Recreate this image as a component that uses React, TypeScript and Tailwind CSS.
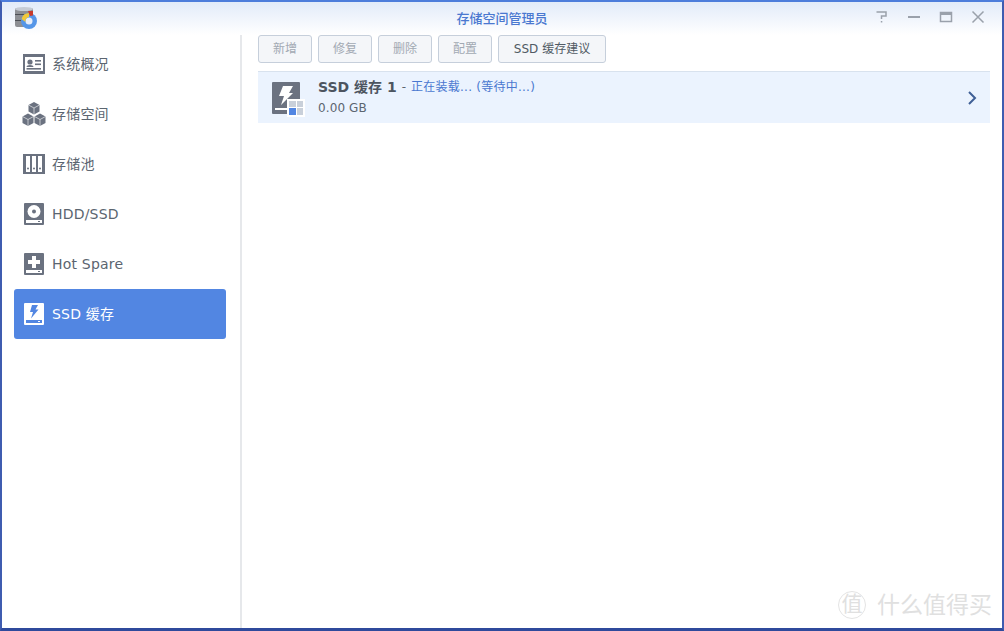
import type { ReactNode } from "react";

const FONT = "font-['DejaVu_Sans','Noto_Sans_CJK_SC',sans-serif]";

function OverviewIcon() {
  return (
    <svg width="22" height="20" viewBox="0 0 22 20">
      <rect x="0" y="0" width="22" height="20" fill="#6b7280" />
      <rect x="2" y="3" width="18" height="14" fill="#fff" />
      <circle cx="7" cy="8" r="2.600" fill="#6b7280" />
      <path d="M3.500 13c0-1.200 1.500-2 3.500-2s3.500.8 3.500 2z" fill="#6b7280" />
      <rect x="12" y="6" width="6" height="1.600" fill="#6b7280" />
      <rect x="12" y="9.500" width="6" height="1.600" fill="#6b7280" />
      <rect x="3.500" y="14" width="14.500" height="1.600" fill="#6b7280" />
    </svg>
  );
}

function CubesIcon() {
  return (
    <svg width="24" height="24" viewBox="0 0 24 24">
      <path d="M12 0l5.500 3v6.500L12 12.500l-5.500-3V3z" fill="#6b7280" />
      <path d="M6 11.500l5.500 3V21L6 24 .5 21v-6.500z" fill="#6b7280" />
      <path d="M18 11.500l5.500 3V21L18 24l-5.500-3v-6.500z" fill="#6b7280" />
      <path d="M6.500 3L12 6l5.500-3M12 6v6.500M.5 14.500l5.500 3 5.500-3M6 17.500V24M12.500 14.500l5.500 3 5.500-3M18 17.500V24" stroke="#fff" strokeWidth="0.600" fill="none" />
    </svg>
  );
}

function PoolIcon() {
  return (
    <svg width="22" height="20" viewBox="0 0 22 20">
      <rect x="0" y="0" width="22" height="20" fill="#6b7280" />
      <rect x="3" y="2" width="4" height="16" fill="#fff" />
      <rect x="9" y="2" width="4" height="16" fill="#fff" />
      <rect x="15" y="2" width="4" height="16" fill="#fff" />
      <circle cx="5" cy="14.500" r="1" fill="#6b7280" />
      <circle cx="11" cy="14.500" r="1" fill="#6b7280" />
      <circle cx="17" cy="14.500" r="1" fill="#6b7280" />
    </svg>
  );
}

function DriveFrame({ bg, fg, children }: { bg: string; fg: string; children?: ReactNode }) {
  return (
    <svg width="20" height="22" viewBox="0 0 20 22">
      <rect x="0" y="0" width="20" height="22" rx="1" fill={bg} />
      <rect x="2" y="17" width="16" height="3" fill={fg} />
      <rect x="14" y="18" width="2" height="1" fill={bg} />
      {children}
    </svg>
  );
}

function HddIcon() {
  return (
    <DriveFrame bg="#6b7280" fg="#fff">
      <circle cx="10" cy="8.500" r="6.500" fill="#fff" />
      <circle cx="10" cy="8.500" r="2" fill="#6b7280" />
    </DriveFrame>
  );
}

function SpareIcon() {
  return (
    <DriveFrame bg="#6b7280" fg="#fff">
      <path d="M8 3h4v4h4v4h-4v4H8v-4H4V7h4z" fill="#fff" />
    </DriveFrame>
  );
}

function SsdIcon() {
  return (
    <DriveFrame bg="#fff" fg="#5286e2">
      <path d="M8 2h6l-2.500 4.500h3L7 15.500 9 9H6z" fill="#5286e2" />
    </DriveFrame>
  );
}

function CacheIcon() {
  return (
    <div className="relative h-[32px] w-[28px]">
      <svg width="28" height="32" viewBox="0 0 28 32">
        <rect x="0" y="0" width="28" height="32" rx="1" fill="#6b7280" />
        <path d="M11 4h10l-4 7h4L9 23l3-9H7z" fill="#fff" />
        <rect x="3" y="26" width="13" height="2" fill="#fff" />
      </svg>
      <div className="absolute left-[15px] top-[17px] grid h-[18px] w-[18px] grid-cols-2 gap-[1px] bg-white p-[2px]">
        <div className="bg-[#c9d0da]" />
        <div className="bg-[#c9d0da]" />
        <div className="bg-[#5286e2]" />
        <div className="bg-[#c9d0da]" />
      </div>
    </div>
  );
}

function AppLogo() {
  return (
    <svg width="24" height="24" viewBox="0 0 24 24">
      <rect x="1" y="2" width="18" height="19" rx="2" fill="#8d8f94" />
      <rect x="1" y="8" width="18" height="1" fill="#4c4f55" />
      <rect x="1" y="14" width="18" height="1" fill="#4c4f55" />
      <ellipse cx="10" cy="3" rx="9" ry="2" fill="#c6ccd6" />
      <circle cx="15" cy="15" r="8" fill="#5596e8" />
      <circle cx="15" cy="15" r="3.500" fill="#e8eefa" />
      <path d="M15 7a8 8 0 0 0-7.500 6l4 3a4 4 0 0 1 3.500-5z" fill="#f2c838" />
      <path d="M14 5h5v4.500l-3 .5z" fill="#c83a2c" />
    </svg>
  );
}

const navItems = [
  { label: "系统概况", icon: <OverviewIcon /> },
  { label: "存储空间", icon: <CubesIcon /> },
  { label: "存储池", icon: <PoolIcon /> },
  { label: "HDD/SSD", icon: <HddIcon /> },
  { label: "Hot Spare", icon: <SpareIcon /> },
  { label: "SSD 缓存", icon: <SsdIcon />, active: true },
];

const buttons = [
  { label: "新增", disabled: true },
  { label: "修复", disabled: true },
  { label: "删除", disabled: true },
  { label: "配置", disabled: true },
  { label: "SSD 缓存建议", disabled: false },
];

export default function App() {
  return (
    <div className={`${FONT} relative flex h-[631px] w-[1004px] flex-col overflow-hidden border-x-2 border-t-2 border-b-[3px] border-x-[#3f5cb0] border-t-[#4d7ddb] border-b-[#2f4a9c] bg-white text-[14px] text-[#5b6570]`}>
      <header className="relative flex h-[33px] shrink-0 items-center justify-center bg-gradient-to-b from-[#e2ebf9] to-white">
        <div className="absolute left-[12px] top-[4px]">
          <AppLogo />
        </div>
        <span className="text-[13px] font-medium text-[#4a78d0]">存储空间管理员</span>
        <div className="absolute right-[17px] top-[8px] flex items-center gap-[18px]">
          <svg width="14" height="14" viewBox="0 0 14 14" fill="none" stroke="#9aa1ab" strokeWidth="1.500">
            <path d="M1.500 2h9.500v4H6.500v3" />
            <rect x="5.800" y="11" width="1.500" height="1.500" fill="#9aa1ab" stroke="none" />
          </svg>
          <svg width="14" height="14" viewBox="0 0 14 14">
            <rect x="1" y="6" width="12" height="2" fill="#9aa1ab" />
          </svg>
          <svg width="14" height="14" viewBox="0 0 14 14" fill="none">
            <rect x="1.500" y="2.500" width="11" height="9" stroke="#9aa1ab" strokeWidth="1.500" />
            <rect x="1" y="2" width="12" height="3" fill="#9aa1ab" />
          </svg>
          <svg width="14" height="14" viewBox="0 0 14 14" fill="none" stroke="#9aa1ab" strokeWidth="1.500">
            <path d="M1.500 1.500l11 11M12.500 1.500l-11 11" />
          </svg>
        </div>
      </header>

      <div className="flex min-h-0 flex-1">
        <aside className="flex w-[240px] shrink-0 flex-col border-r-2 border-[#e6e8eb] pl-[12px] pr-[14px] pt-[4px]">
          {navItems.map((item) => (
            <div
              key={item.label}
              className={`flex h-[50px] items-center rounded-[3px] tracking-[0.2px] ${item.active ? "bg-[#5286e2] text-white" : ""}`}
            >
              <div className="flex w-[38px] shrink-0 justify-center pl-[2px]">{item.icon}</div>
              <span>{item.label}</span>
            </div>
          ))}
        </aside>

        <main className="flex min-w-0 flex-1 flex-col pl-[16px] pr-[12px]">
          <div className="flex gap-[6px]">
            {buttons.map((b) => (
              <button
                key={b.label}
                className={`h-[28px] rounded-[3px] border border-[#c6cfdb] bg-[#f4f6f9] text-[12px] ${b.disabled ? "w-[54px] text-[#a2a9b3]" : "w-[108px] text-[#505a64]"}`}
              >
                {b.label}
              </button>
            ))}
          </div>
          <div className="mt-[8px] flex h-[52px] items-center border-t border-[#d8e2ee] bg-[#ebf3fe] pl-[14px] pr-[13px]">
            <CacheIcon />
            <div className="ml-[18px] flex flex-1 flex-col gap-[4px] pb-[2px]">
              <div className="flex items-center leading-[18px]">
                <span className="font-bold text-[#4d5560]">SSD 缓存 1</span>
                <span className="ml-[5px] text-[12px]">-</span>
                <span className="ml-[5px] text-[12px] tracking-[0.25px] text-[#4a78d0]">正在装载... (等待中...)</span>
              </div>
              <div className="text-[12px] leading-[16px] tracking-[0.1px]">0.00 GB</div>
            </div>
            <svg width="10" height="14" viewBox="0 0 10 14" fill="none" stroke="#3f5f96" strokeWidth="2">
              <path d="M2 1l6 6-6 6" />
            </svg>
          </div>
        </main>
      </div>

      <div className="absolute bottom-[9px] right-[10px] flex items-center gap-[11px] text-[#e0e0e0]">
        <div className="flex h-[28px] w-[28px] items-center justify-center rounded-full border border-[#e4e4e4] text-[21px]">值</div>
        <span className="text-[23px] leading-none">什么值得买</span>
      </div>
    </div>
  );
}
